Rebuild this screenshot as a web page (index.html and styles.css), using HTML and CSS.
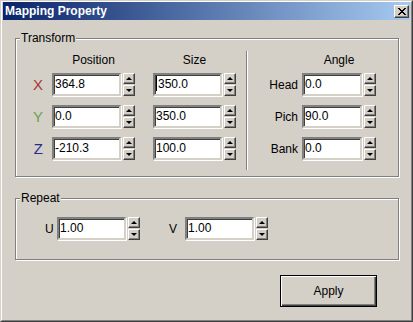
FILE: index.html
```html
<!DOCTYPE html>
<html>
<head>
    <title>Mapping Property</title>
    <link rel="stylesheet" href="styles.css">
</head>
<body>
    <div class="window">
        <div class="frame">
            <div class="titlebar">
                <span class="title">Mapping Property</span>
                <span class="close">
                    <svg width="8" height="7" viewBox="0 0 8 7" shape-rendering="crispEdges">
                        <path d="M0 0h2v1h-2z M6 0h2v1h-2z M1 1h2v1h-2z M5 1h2v1h-2z M2 2h4v1h-4z M3 3h2v1h-2z M2 4h4v1h-4z M1 5h2v1h-2z M5 5h2v1h-2z M0 6h2v1h-2z M6 6h2v1h-2z" fill="#000"/>
                    </svg>
                </span>
            </div>

            <div class="content">
                <!-- Transform group -->
                <fieldset class="group transform">
                    <legend>Transform</legend>
                    <div class="transform-body">
                        <div class="xform">
                            <div class="heads">
                                <span></span>
                                <span class="head">Position</span>
                                <span class="head size">Size</span>
                            </div>
                            <div class="rows">
                                <span class="axis axis-x">X</span>
                                <div class="spin-field">
                                    <div class="edit">364.8</div>
                                    <div class="updown"><span class="arrow up"></span><span class="arrow down"></span></div>
                                </div>
                                <div class="spin-field size">
                                    <div class="edit"><span class="caret"></span>350.0</div>
                                    <div class="updown"><span class="arrow up"></span><span class="arrow down"></span></div>
                                </div>

                                <span class="axis axis-y">Y</span>
                                <div class="spin-field">
                                    <div class="edit">0.0</div>
                                    <div class="updown"><span class="arrow up"></span><span class="arrow down"></span></div>
                                </div>
                                <div class="spin-field size">
                                    <div class="edit">350.0</div>
                                    <div class="updown"><span class="arrow up"></span><span class="arrow down"></span></div>
                                </div>

                                <span class="axis axis-z">Z</span>
                                <div class="spin-field">
                                    <div class="edit">-210.3</div>
                                    <div class="updown"><span class="arrow up"></span><span class="arrow down"></span></div>
                                </div>
                                <div class="spin-field size">
                                    <div class="edit">100.0</div>
                                    <div class="updown"><span class="arrow up"></span><span class="arrow down"></span></div>
                                </div>
                            </div>
                        </div>

                        <div class="separator"></div>

                        <div class="angles">
                            <div class="heads">
                                <span></span>
                                <span class="head">Angle</span>
                            </div>
                            <div class="rows">
                                <span class="angle-label">Head</span>
                                <div class="spin-field">
                                    <div class="edit">0.0</div>
                                    <div class="updown"><span class="arrow up"></span><span class="arrow down"></span></div>
                                </div>

                                <span class="angle-label">Pich</span>
                                <div class="spin-field">
                                    <div class="edit">90.0</div>
                                    <div class="updown"><span class="arrow up"></span><span class="arrow down"></span></div>
                                </div>

                                <span class="angle-label">Bank</span>
                                <div class="spin-field">
                                    <div class="edit">0.0</div>
                                    <div class="updown"><span class="arrow up"></span><span class="arrow down"></span></div>
                                </div>
                            </div>
                        </div>
                    </div>
                </fieldset>

                <!-- Repeat group -->
                <fieldset class="group repeat">
                    <legend>Repeat</legend>
                    <div class="repeat-row">
                        <span class="uv-label">U</span>
                        <div class="spin-field">
                            <div class="edit">1.00</div>
                            <div class="updown"><span class="arrow up"></span><span class="arrow down"></span></div>
                        </div>
                        <span class="uv-label v">V</span>
                        <div class="spin-field">
                            <div class="edit">1.00</div>
                            <div class="updown"><span class="arrow up"></span><span class="arrow down"></span></div>
                        </div>
                    </div>
                </fieldset>

                <button type="button" class="apply">Apply</button>
            </div>
        </div>
    </div>
</body>
</html>
```

FILE: styles.css
```css
/* Basic page setup */
* {
    box-sizing: border-box;
}

body {
    margin: 0;
    font-family: "Liberation Sans", Arial, sans-serif;
    font-size: 12px;
    color: #000;
    background-color: #d4d0c8;
}

/* Window frame */
.window {
    width: 413px;
    height: 322px;
    border: 1px solid;
    border-color: #d4d0c8 #404040 #404040 #d4d0c8;
}

.frame {
    height: 100%;
    border: 1px solid;
    border-color: #fff #808080 #808080 #fff;
    padding: 0 1px 1px 1px;
    background-color: #d4d0c8;
}

/* Title bar */
.titlebar {
    height: 18px;
    display: flex;
    align-items: center;
    justify-content: space-between;
    padding: 0 1px 0 2px;
    background: linear-gradient(to right, #0a246a, #a6caf0);
}

.title {
    color: #fff;
    font-weight: bold;
    font-size: 12px;
}

.close {
    width: 15px;
    height: 13px;
    display: flex;
    align-items: center;
    justify-content: center;
    background-color: #d4d0c8;
    border: 1px solid;
    border-color: #fff #404040 #404040 #fff;
    box-shadow: inset -1px -1px 0 #808080;
}

/* Dialog content */
.content {
    padding: 11px 0 0 12px;
}

/* Etched group boxes */
.group {
    width: 384px;
    margin: 0;
    padding: 0;
    min-width: 0;
    border: 1px solid #808080;
    box-shadow: inset 1px 1px 0 #fff, 1px 1px 0 #fff;
}

.group legend {
    margin-left: 4px;
    padding: 0 1px;
    line-height: 14px;
    background-color: #d4d0c8;
}

/* Transform group layout */
.transform-body {
    display: flex;
    padding: 6px 0 6px 0;
}

.heads,
.rows {
    display: grid;
}

.heads {
    margin-top: 2px;
    line-height: 14px;
}

.rows {
    margin-top: 6px;
    row-gap: 9px;
    grid-auto-rows: 23px;
    align-items: center;
    padding-bottom: 10px;
}

/* label | position | gap + size */
.xform .heads,
.xform .rows {
    grid-template-columns: 36px 83px 101px;
}

.xform .size {
    width: 83px;
    justify-self: end;
}

.angles .heads,
.angles .rows {
    grid-template-columns: 50px 74px;
    column-gap: 4px;
}

.head {
    text-align: center;
}

.axis {
    font-size: 15px;
    text-align: right;
    padding-right: 9px;
}

.axis-x { color: #a83838; }
.axis-y { color: #6aa050; }
.axis-z { color: #2a2a8c; }

.angle-label {
    text-align: right;
}

.separator {
    width: 2px;
    margin-left: 10px;
    border-left: 1px solid #808080;
    border-right: 1px solid #fff;
}

/* Edit box with up/down buttons */
.spin-field {
    display: flex;
    gap: 2px;
    height: 23px;
}

.edit {
    flex: 1;
    height: 23px;
    padding: 0 0 0 1px;
    line-height: 19px;
    background-color: #fff;
    border: 2px solid;
    border-color: #808080 #d4d0c8 #d4d0c8 #808080;
    box-shadow: inset 1px 1px 0 #404040, 1px 1px 0 #fff;
    white-space: nowrap;
}

.caret {
    display: inline-block;
    width: 1px;
    height: 15px;
    margin-right: 1px;
    vertical-align: -3px;
    background-color: #000;
}

.updown {
    width: 12px;
    display: flex;
    flex-direction: column;
    gap: 1px;
}

.arrow {
    height: 11px;
    display: flex;
    align-items: center;
    justify-content: center;
    background-color: #d4d0c8;
    border: 1px solid;
    border-color: #fff #404040 #404040 #fff;
    box-shadow: inset -1px -1px 0 #808080;
}

.arrow::before {
    content: "";
    width: 0;
    height: 0;
    border-left: 3px solid transparent;
    border-right: 3px solid transparent;
}

.arrow.up::before {
    border-bottom: 3px solid #000;
}

.arrow.down::before {
    border-top: 3px solid #000;
}

/* Repeat group */
.repeat {
    margin-top: 14px;
}

.repeat-row {
    display: flex;
    align-items: center;
    padding: 12px 0 19px 29px;
}

.repeat .spin-field {
    width: 83px;
}

.uv-label {
    width: 12px;
}

.uv-label.v {
    width: 16px;
    margin-left: 29px;
}

/* Apply button */
.apply {
    display: block;
    width: 97px;
    height: 32px;
    margin: 15px 0 0 265px;
    padding: 0;
    font-family: "Liberation Sans", Arial, sans-serif;
    font-size: 12px;
    color: #000;
    background-color: #d4d0c8;
    border: 1px solid #000;
    box-shadow: inset 1px 1px 0 #fff, inset -1px -1px 0 #404040, inset -2px -2px 0 #808080;
}
```
